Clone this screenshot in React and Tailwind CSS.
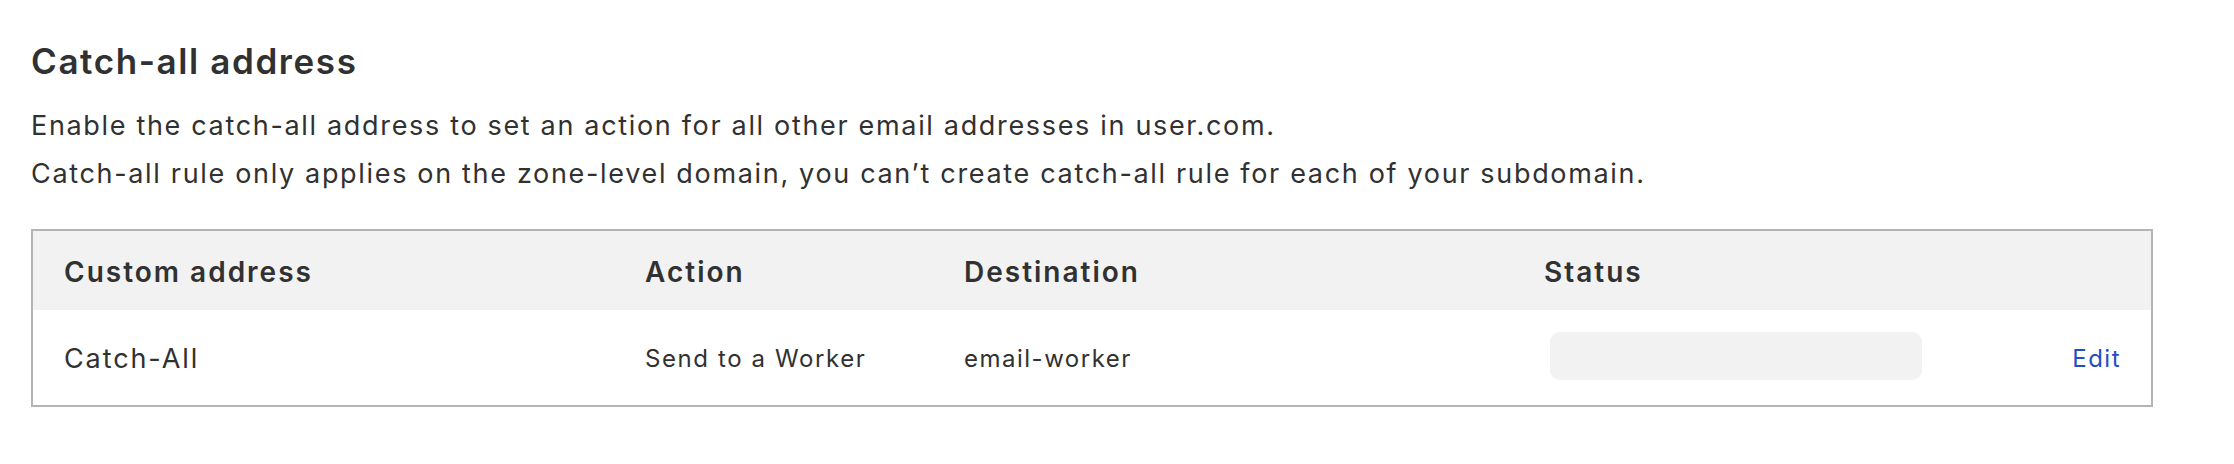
export default function App() {
  return (
    <div className="w-[2234px] h-[464px] bg-white text-[#313131] pl-[31px] pr-[81px] pt-[37px]" style={{ fontFamily: "Inter, 'Noto Sans', sans-serif" }}>
      <h2 className="text-[35px] leading-[48px] font-semibold tracking-[1.6px]">Catch-all address</h2>
      <div className="mt-[17px] text-[27px] leading-[48px] tracking-[1.67px]">
        <p>Enable the catch-all address to set an action for all other email addresses in user.com.</p>
        <p>Catch-all rule only applies on the zone-level domain, you can’t create catch-all rule for each of your subdomain.</p>
      </div>
      <div className="mt-[31px] border-2 border-[#b4b4b4]">
        <div className="grid grid-cols-[581px_319px_580px_1fr] items-center h-[79px] bg-[#f2f2f2] pl-[31px] pr-[30px] pt-[2px] text-[28px] font-semibold tracking-[2px]">
          <div>Custom address</div>
          <div>Action</div>
          <div>Destination</div>
          <div>Status</div>
        </div>
        <div className="grid grid-cols-[581px_319px_580px_1fr] items-center h-[95px] pl-[31px] pr-[30px]">
          <div className="pt-[3px] text-[27px] tracking-[1.9px]">Catch-All</div>
          <div className="pt-[3px] text-[24px] tracking-[1.6px]">Send to a Worker</div>
          <div className="pt-[3px] text-[24px] tracking-[1.5px]">email-worker</div>
          <div className="flex items-center justify-between">
            <div className="ml-[6px] mb-[3px] w-[372px] h-[48px] rounded-[10px] bg-[#f2f2f2]"></div>
            <a className="pt-[3px] text-[24px] tracking-[1.5px] text-[#1f4fc2]">Edit</a>
          </div>
        </div>
      </div>
    </div>
  );
}
